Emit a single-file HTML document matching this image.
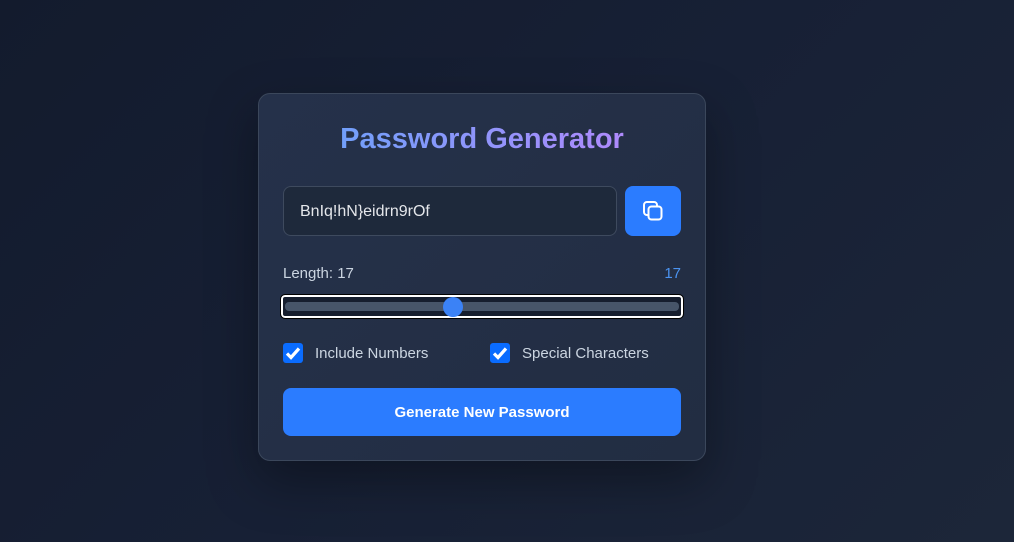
<!DOCTYPE html>
<html><head><style>
*{box-sizing:border-box;margin:0;padding:0}
body{width:1014px;height:542px;overflow:hidden;background:linear-gradient(135deg,#131b2d 0%,#172035 50%,#1c2639 100%);font-family:"Liberation Sans",sans-serif;position:relative}
.card{position:absolute;left:258px;top:93px;width:448px;height:368px;border:1px solid #3b475b;border-radius:12px;background:linear-gradient(135deg,#25314a,#222d42);box-shadow:0 20px 50px rgba(0,0,0,.35)}
h1{position:absolute;top:27px;left:0;width:100%;text-align:center;font-size:29px;font-weight:bold;background:linear-gradient(90deg,#60a5fa,#c084fc);-webkit-background-clip:text;background-clip:text;color:transparent;line-height:36px}
.inp{position:absolute;left:24px;top:92px;width:334px;height:50px;border:1px solid #3e4a5e;border-radius:8px;background:#1e293b;color:#e5e7eb;font-size:16px;line-height:50px;padding-left:16px}
.cp{position:absolute;left:366px;top:92px;width:56px;height:50px;border-radius:8px;background:#2b7cff}
.lab{position:absolute;top:171px;font-size:15px;color:#cbd5e1}
.sl{position:absolute;left:22px;top:201px;width:402px;height:23px;border:2px solid #fff;border-radius:4px;outline:1px solid #000;background:#161e2e}
.tr{position:absolute;left:2px;top:5px;right:2px;height:9px;border-radius:4px;background:#475569}
.th{position:absolute;left:160px;top:0px;width:20px;height:20px;border-radius:50%;background:#3b82f6}
.cb{position:absolute;top:249px;width:20px;height:20px;border-radius:3px;background:#0a6cff}
.ct{position:absolute;top:250px;font-size:15px;color:#cbd5e1;line-height:20px}
.btn{position:absolute;left:24px;top:294px;width:398px;height:48px;border-radius:8px;background:#2b7cff;color:#fff;font-weight:bold;font-size:15px;text-align:center;line-height:50px}
</style></head><body>
<div class="card">
<h1>Password Generator</h1>
<div class="inp">BnIq!hN}eidrn9rOf</div>
<div class="cp"><svg width="56" height="50" viewBox="0 0 56 50"><rect x="19" y="16" width="13" height="13" rx="3" fill="none" stroke="#fff" stroke-width="2"/><rect x="23.5" y="20.5" width="13" height="13" rx="3" fill="#2b7cff" stroke="#fff" stroke-width="2"/></svg></div>
<div class="lab" style="left:24px">Length: 17</div>
<div class="lab" style="right:24px;color:#4b93f0">17</div>
<div class="sl"><div class="tr"></div><div class="th"></div></div>
<div class="cb" style="left:24px"><svg width="20" height="20"><path d="M4 10.5l4 4 8-9" fill="none" stroke="#fff" stroke-width="3.2"/></svg></div>
<div class="ct" style="left:56px">Include Numbers</div>
<div class="cb" style="left:231px"><svg width="20" height="20"><path d="M4 10.5l4 4 8-9" fill="none" stroke="#fff" stroke-width="3.2"/></svg></div>
<div class="ct" style="left:263px">Special Characters</div>
<div class="btn">Generate New Password</div>
</div>
</body></html>
